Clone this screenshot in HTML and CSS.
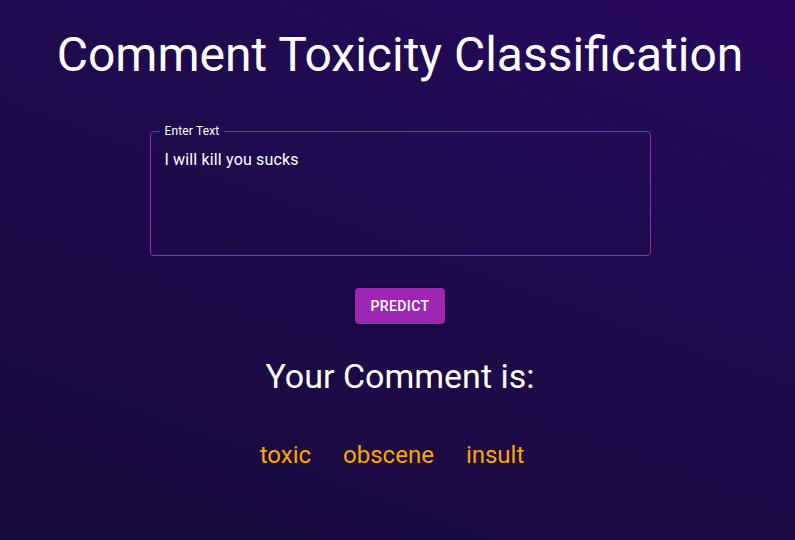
FILE: index.html
```html
<!DOCTYPE html>
<html lang="en">
<head>
<meta charset="utf-8">
<title>Comment Toxicity Classification</title>
<link rel="stylesheet" href="styles.css">
</head>
<body>
<main class="page">
  <h1 class="title">Comment Toxicity Classification</h1>
  <fieldset class="field">
    <legend class="field-label">Enter Text</legend>
    <textarea class="field-input" rows="4">I will kill you sucks</textarea>
  </fieldset>
  <button class="predict" type="button">Predict</button>
  <h2 class="result-title">Your Comment is:</h2>
  <div class="labels">
    <span class="label">toxic</span>
    <span class="label">obscene</span>
    <span class="label">insult</span>
  </div>
</main>
</body>
</html>
```
FILE: styles.css
```css
html, body {
  margin: 0;
  height: 100%;
}
body {
  background: linear-gradient(200deg, #2a0860 0%, #200a50 30%, #1d0a48 60%, #180a3c 100%);
  font-family: Roboto, "Noto Sans", sans-serif;
  color: #fff;
}
.page {
  display: flex;
  flex-direction: column;
  align-items: center;
  padding: 27px 0 0 5px;
}
.title {
  margin: 0;
  font-size: 48px;
  font-weight: 400;
  line-height: 1.167;
}
.field {
  margin: 41px 0 0;
  width: 501px;
  box-sizing: border-box;
  border: 1px solid #9c27b0;
  border-radius: 4px;
  padding: 0 13px 0 9px;
  min-width: 0;
}
.field-label {
  padding: 0 5px;
  font-size: 12px;
  line-height: 14px;
  color: #fff;
  letter-spacing: 0.15px;
}
.field-input {
  display: block;
  width: 100%;
  box-sizing: border-box;
  background: transparent;
  border: 0;
  outline: none;
  resize: none;
  color: #fff;
  font-family: Roboto, "Noto Sans", sans-serif;
  font-size: 16px;
  line-height: 23px;
  letter-spacing: 0.15px;
  padding: 10px 0 15px 5px;
  margin: 0;
}
.predict {
  margin-top: 32px;
  width: 90px;
  height: 36px;
  border: 0;
  border-radius: 4px;
  background: #9c27b0;
  color: #fff;
  font-family: Roboto, sans-serif;
  font-size: 14px;
  font-weight: 500;
  letter-spacing: 0.4px;
  text-transform: uppercase;
  box-shadow: 0 3px 1px -2px rgba(0,0,0,.2), 0 2px 2px 0 rgba(0,0,0,.14), 0 1px 5px 0 rgba(0,0,0,.12);
}
.result-title {
  margin: 32px 0 0;
  font-size: 34px;
  font-weight: 400;
  line-height: 1.235;
}
.labels {
  margin-top: 41px;
  display: flex;
  gap: 32px;
  padding-right: 16px;
}
.label {
  color: #ffa500;
  font-size: 24px;
  line-height: 1.334;
}
```
